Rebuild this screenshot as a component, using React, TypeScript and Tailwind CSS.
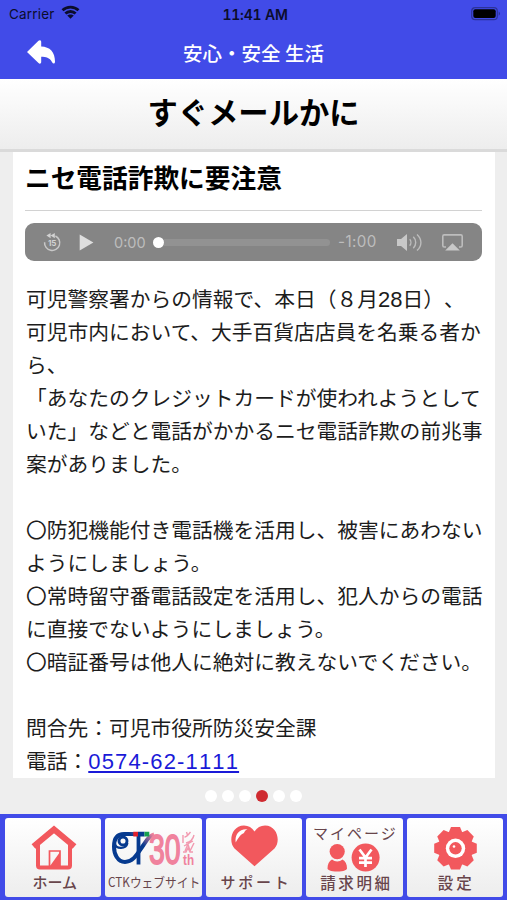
import type { ReactNode } from "react"

const lines = [
  "可児市内において、大手百貨店店員を名乗る者か",
  "ら、",
  "「あなたのクレジットカードが使われようとして",
  "いた」などと電話がかかるニセ電話詐欺の前兆事",
  "案がありました。",
  "",
  "〇防犯機能付き電話機を活用し、被害にあわない",
  "ようにしましょう。",
  "〇常時留守番電話設定を活用し、犯人からの電話",
  "に直接でないようにしましょう。",
  "〇暗証番号は他人に絶対に教えないでください。",
  "",
  "問合先：可児市役所防災安全課",
]

function StatusBar() {
  return (
    <div className="grid h-7 grid-cols-3 items-center pl-[9px] pr-[6px] font-['Inter','Liberation_Sans',sans-serif] text-[#0b0d2c]">
      <div className="flex items-center gap-[6px] text-[13.5px]">
        <span className="tracking-[0.2px]">Carrier</span>
        <svg className="-mt-1" width="19" height="14" viewBox="0 0 18 14" fill="none" stroke="#0b0d2c" strokeWidth="2.8">
          <path d="M1 5.2C5.4 1 12.6 1 17 5.2" />
          <path d="M3.9 8.6c2.8-2.8 7.4-2.8 10.2 0" />
          <path d="M9 13.8 5.7 10.6c1.7-1.6 4.9-1.6 6.6 0z" fill="#0b0d2c" stroke="none" />
        </svg>
      </div>
      <span className="text-center text-[14px] font-semibold tracking-[-0.2px] tabular-nums whitespace-nowrap">11:41 AM</span>
      <svg className="justify-self-end" width="30" height="14" viewBox="0 0 30 14">
        <rect x="0.7" y="0.7" width="25.6" height="12" rx="3.5" fill="none" stroke="#2c3399" strokeWidth="1.2" />
        <rect x="2.3" y="2.3" width="22.4" height="8.8" rx="2" fill="#000" />
        <path d="M27.7 4.6c1.8.8 1.8 3.4 0 4.2z" fill="#2c3399" />
      </svg>
    </div>
  )
}

function Player() {
  return (
    <div className="mt-3 flex h-[38px] items-center rounded-[9px] bg-[#858585] pl-[18px] pr-[19px] font-['Inter','Liberation_Sans',sans-serif] text-[14.5px] text-[#bdbdbd]">
      <svg width="19" height="19" viewBox="0 0 19 19" fill="none" stroke="#c8c8c8" strokeWidth="1.5">
        <path d="M1.6 9.2A7.6 7.6 0 1 0 12.4 3" />
        <path d="M7.6 0v5.2L3.4 2.6zM11.8 0v5.2L7.6 2.6z" fill="#d2d2d2" stroke="none" />
        <text x="9.2" y="12.8" fontSize="8" fontWeight="700" textAnchor="middle" fill="#d2d2d2" stroke="none">15</text>
      </svg>
      <svg className="ml-[17px]" width="15" height="17" viewBox="0 0 15 17" fill="#dedede">
        <path d="M.7.5 14.4 8.5.7 16.5z" />
      </svg>
      <span className="mt-px ml-5 w-[33px] whitespace-nowrap">0:00</span>
      <div className="ml-[6px] flex flex-1 items-center">
        <span className="size-[11px] rounded-full bg-white" />
        <span className="h-[7px] flex-1 rounded-r-full bg-[#929292]" />
      </div>
      <span className="mt-px ml-2 w-10 text-[15.2px] tracking-[0.4px] whitespace-nowrap">-1:00</span>
      <svg className="ml-[18px]" width="27" height="19" viewBox="0 0 27 19" fill="none" stroke="#bdbdbd" strokeWidth="1.4">
        <path d="M1 6h4l6-5v17l-6-5H1z" fill="#c8c8c8" stroke="none" />
        <path d="M13.7 6.3c1.6 1.8 1.6 4.6 0 6.4M17.3 3.8c3.2 3.2 3.2 8.2 0 11.4M21 1.4c5.2 4.6 5.2 11.6 0 16.2" />
      </svg>
      <svg className="ml-[19px]" width="21" height="17" viewBox="0 0 21 17" fill="none" stroke="#bdbdbd" strokeWidth="1.6">
        <path d="M4 13H2.2C1.3 13 .8 12.5.8 11.6V2.3C.8 1.4 1.3.9 2.2.9h16.6c.9 0 1.4.5 1.4 1.4v9.3c0 .9-.5 1.4-1.4 1.4H17" />
        <path d="M10.5 9.3 17.8 16.6H3.2z" fill="#c8c8c8" stroke="none" />
      </svg>
    </div>
  )
}

function Tab({ children, label, className }: { children: ReactNode; label: string; className: string }) {
  return (
    <a className="flex h-[79px] w-24 flex-1 flex-col items-center overflow-hidden rounded-[3px] bg-linear-to-b from-white to-[#ededed] text-[#68454b]">
      {children}
      <span className={`whitespace-nowrap leading-[18px] ${className}`}>{label}</span>
    </a>
  )
}

function HomeIcon() {
  return (
    <svg className="h-[55px] w-24 shrink-0" viewBox="0 0 96 55" fill="none" stroke="#f2585d">
      <path d="M28.5 28.5 49 11.5l20.5 17" strokeWidth="6" />
      <path d="M33 26v21.5a2 2 0 0 0 2 2h28a2 2 0 0 0 2-2V26" strokeWidth="4" />
      <path d="M44.5 49V33H55v16" strokeWidth="1.7" />
      <path d="M45 48 55 34v14z" fill="#f2585d" stroke="none" />
    </svg>
  )
}

function CtkLogo() {
  return (
    <svg className="h-[55px] w-24 shrink-0" viewBox="0 3 96 55" fill="none">
      <defs>
        <linearGradient id="swoosh" gradientUnits="userSpaceOnUse" x1="36" y1="34" x2="48" y2="20">
          <stop offset="0.2" stopColor="#063a8f" />
          <stop offset="1" stopColor="#f0829d" />
        </linearGradient>
      </defs>
      <path d="M28 19H18C11 19 8 24 8 31.5S11.5 47 19 47C27.5 47 31.5 38.5 37.5 30 41 25 43 20.5 48 19.5" stroke="url(#swoosh)" strokeWidth="4" />
      <circle cx="17" cy="26" r="4" stroke="#063a8f" strokeWidth="2.9" />
      <path d="M9 29c1 5 11 5.5 12.5-1" stroke="#063a8f" strokeWidth="2.2" />
      <path d="M32.5 19v30.5" stroke="#063a8f" strokeWidth="3.8" />
      <path d="M32 16.8h6.5v4.6H32z" fill="#063a8f" />
      <path d="M27.3 16.8H32v4.6h-4.7z" fill="#e0202c" />
      <path d="M38.5 16.8h4.8v4.6h-4.8z" fill="#16a050" />
      <g fill="#f0829d" fontFamily="Liberation Sans, sans-serif">
        <text transform="translate(43 48.5) scale(.66 1)" stroke="#f0829d" strokeWidth="1.8" strokeLinejoin="round" fontSize="43">30</text>
        <text transform="translate(77 49.5) scale(.78 1)" fontWeight="700" fontSize="15">th</text>
      </g>
      <path
        d="M77 20v8M80.5 17l1 3M84.5 17c-3 4-5 5-6 5M88 20c-1 5-4 7-8 8M78 31l9-5M79 36l3-7 2 7 4-8M77 37h3l2-4 2 4h3"
        stroke="#f29ab0"
        strokeWidth="1.4"
      />
    </svg>
  )
}

function HeartIcon() {
  return (
    <svg className="h-[55px] w-24 shrink-0" viewBox="0 0 96 55">
      <path d="M48.5 48.3 28.5 30.5C22 23.5 25.5 7.5 38 7.5c4.5 0 8 2 10.5 6C51 9.5 54.5 7.5 59 7.5 71.5 7.5 75 23.5 68.5 30.5z" fill="#f2585d" />
      <path d="M29.7 24.5C28.5 16.5 33.5 10.5 41.5 11.3 38.5 12.5 38.7 14 38 15 34 16.5 32.5 20 29.7 24.5z" fill="#fff" />
    </svg>
  )
}

function BillIcon() {
  return (
    <svg className="h-[30px] w-24 shrink-0" viewBox="0 25 96 30" fill="#f2585d">
      <path d="M26 41.5c3 2.5 7.5 2.5 10.5 0 3 1.5 4.5 5 4.5 9 0 1.5-3 3-9.7 3s-9.8-1.5-9.8-3c0-4 1.5-7.5 4.5-9z" />
      <circle cx="31.2" cy="33.6" r="7.6" />
      <circle cx="59.6" cy="39.6" r="14" />
      <path d="M53.5 31.5l6 8 6-8M59.5 39v10M53 40.2h13M53 44.7h13" fill="none" stroke="#fff" strokeWidth="2.7" />
    </svg>
  )
}

function GearIcon() {
  return (
    <svg className="h-[55px] w-24 shrink-0" viewBox="0 0 96 55" fill="#f2585d">
      <circle cx="48.5" cy="30.3" r="17.3" />
      {[0, 45, 90, 135, 180, 225, 270, 315].map((deg) => (
        <path key={deg} d="M41.5 15 44 9h9l2.5 6z" transform={`rotate(${deg} 48.5 30.3)`} />
      ))}
      <circle cx="48.5" cy="30.3" r="9.7" fill="#fff" />
      <circle cx="48.5" cy="30.3" r="6.2" />
      <circle cx="47" cy="28.5" r="1.3" fill="#fff" />
    </svg>
  )
}

export default function App() {
  return (
    <div className="flex h-[900px] w-[507px] flex-col overflow-hidden bg-[#eee] font-['Noto_Sans_CJK_JP',sans-serif]">
      <header className="h-[79px] shrink-0 bg-[#414be8]">
        <StatusBar />
        <div className="grid h-[49px] grid-cols-[80px_1fr_80px] items-center">
          <svg className="-mt-px ml-[27px]" width="28" height="24" viewBox="0 0 28 24" fill="#fff">
            <path d="M0 12 11.5.8c1.1-1.1 2.7-.6 2.7 1V6.5C23 6.8 28 12 28 21.5c0 2.6-1.9 2.7-2.9.7C22.5 17.5 19 16.8 14.2 16.8V22c0 1.8-1.6 2.2-2.7 1.1z" />
          </svg>
          <h1 className="text-center text-[19.5px] font-medium text-white">安心・安全 生活</h1>
        </div>
      </header>
      <div className="flex h-[73px] shrink-0 items-center justify-center border-b-[3px] border-[#dadada] bg-linear-to-b from-white to-[#ededed] pb-[4px]">
        <h2 className="text-[30.3px] font-bold text-black">すぐメールかに</h2>
      </div>
      <main className="ml-[13px] h-[626px] w-[482px] shrink-0 bg-white pl-3 pr-[13px]">
        <h3 className="h-[59px] border-b border-[#d2d2d2] text-[25.7px] leading-[50px] font-bold text-black">ニセ電話詐欺に要注意</h3>
        <Player />
        <div className="mt-[21px] pl-px text-[20.75px] leading-[33px] whitespace-nowrap text-[#1c1c1c] [text-spacing-trim:space-all]">
          <p className="h-[33px]">
            可児警察署からの情報で、本日（８月
            <span className="font-['Liberation_Sans',sans-serif] text-[22px]">28</span>
            日）、
          </p>
          {lines.map((line, i) => (
            <p key={i} className="h-[33px]">{line}</p>
          ))}
          <p className="h-[33px]">
            電話：
            <a className="font-['Liberation_Sans',sans-serif] text-[22px] tracking-[1.15px] text-[#1a1ad8] underline [font-kerning:none]">0574-62-1111</a>
          </p>
        </div>
      </main>
      <div className="flex h-9 shrink-0 items-center justify-center gap-[5px]">
        {[0, 1, 2, 3, 4, 5].map((i) => (
          <span key={i} className={`size-3 rounded-full ${i === 3 ? "bg-[#cf2a30]" : "bg-white"}`} />
        ))}
      </div>
      <nav className="flex h-[86px] shrink-0 gap-1 bg-[#414be8] pt-1 pr-1 pl-[5px]">
        <Tab label="ホーム" className="pl-[3px] text-[15px] font-medium">
          <HomeIcon />
        </Tab>
        <Tab label="CTKウェブサイト" className="scale-x-[.9] text-[13px]">
          <CtkLogo />
        </Tab>
        <Tab label="サポート" className="pl-[4px] text-[15px] font-medium tracking-[2.8px]">
          <HeartIcon />
        </Tab>
        <Tab label="請求明細" className="pl-[4px] text-[15.5px] font-medium tracking-[2.6px]">
          <span className="mt-[5px] pl-[2px] text-[15px] leading-5 tracking-[2px] whitespace-nowrap">マイページ</span>
          <BillIcon />
        </Tab>
        <Tab label="設定" className="pl-[3px] text-[15.5px] font-medium tracking-[3px]">
          <GearIcon />
        </Tab>
      </nav>
    </div>
  )
}
